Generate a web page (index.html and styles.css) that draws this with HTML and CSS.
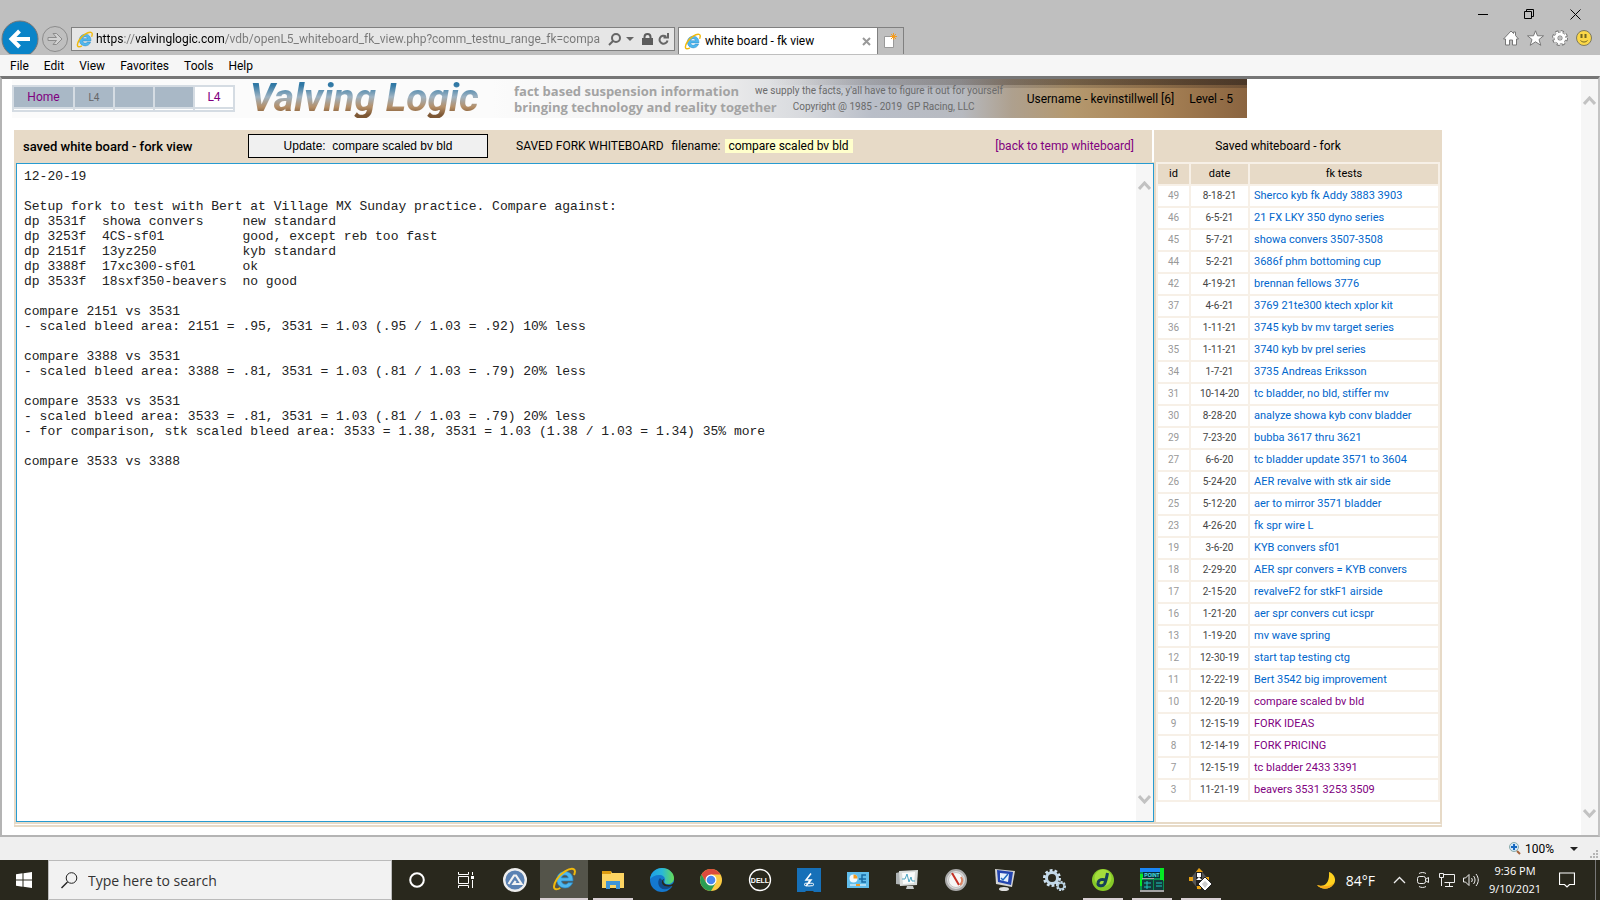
FILE: index.html
```html
<!DOCTYPE html>
<html lang="en">
<head>
  <meta charset="utf-8">
  <title>white board - fk view</title>
  <link rel="stylesheet" href="styles.css">
</head>
<body>
  <!-- shared icon -->
  <svg class="defs" aria-hidden="true">
    <defs>
      <symbol id="ie" viewBox="0 0 24 24">
        <path d="M21 14H9.500c.3 2 1.700 3.200 3.600 3.200 1.300 0 2.300-.5 2.900-1.500h4.600c-1.100 3.200-4 5.300-7.600 5.300-4.900 0-8.200-3.500-8.200-8.200C4.800 7.900 8.300 4.500 13 4.500c5 0 8.300 3.700 8 9.500zM9.600 10.800h6.600c-.3-1.700-1.500-2.700-3.300-2.700-1.700 0-2.900 1-3.300 2.700z" fill="#4fb7ee" stroke="#2284c4" stroke-width=".7"/>
        <path d="M22 8c1.400-3.200 1.300-5.500-.8-6C17 1 9 6 5 12 1.500 17.500 1 22 4 22.300c1.300.1 2.700-.4 4.300-1.300" fill="none" stroke="#f0b90c" stroke-width="2"/>
      </symbol>
    </defs>
  </svg>

  <header class="titlebar">
    <div class="window-buttons">
      <button aria-label="Minimize"><svg width="11" height="11"><path d="M0 5.500h10" stroke="#000"/></svg></button>
      <button aria-label="Restore"><svg width="11" height="11" fill="none" stroke="#000"><path d="M.5 2.500h7v7h-7zM2.500 2.500v-2h7v7h-2"/></svg></button>
      <button aria-label="Close"><svg width="11" height="11"><path d="M.5.5l10 10M10.500.5l-10 10" stroke="#000"/></svg></button>
    </div>
    <div class="toolbar">
      <button class="back" aria-label="Back"><svg width="38" height="34" viewBox="0 0 38 34"><circle cx="19" cy="19" r="18" fill="#0a84c8" stroke="#777"/><path d="M29 19H11M18.500 11L10.500 19l8 8" fill="none" stroke="#fff" stroke-width="4"/></svg></button>
      <button class="forward" aria-label="Forward"><svg width="26" height="26" viewBox="0 0 26 26" fill="none" stroke="#8c8c8c"><circle cx="13" cy="13" r="12.500"/><path d="M6 11.500h8.500l-3.500-4h3.500l5.500 5.500-5.500 5.500h-3.500l3.500-4H6z" fill="#d2d2d2"/></svg></button>
      <div class="address">
        <svg width="17" height="17"><use href="#ie"/></svg>
        <input type="text" aria-label="Address" value="https://valvinglogic.com/vdb/openL5_whiteboard_fk_view.php?comm_testnu_range_fk=compa">
        <button aria-label="Search"><svg width="13" height="13" fill="none" stroke="#666" stroke-width="2"><circle cx="8" cy="5" r="4"/><path d="M5 8L1 12"/></svg></button>
        <button class="drop" aria-label="Show address list"><svg width="8" height="4"><path d="M0 0h8L4 4z" fill="#666"/></svg></button>
        <button aria-label="Security report"><svg width="11" height="13"><path d="M2.500 6V4a3 3 0 0 1 6 0v2" fill="none" stroke="#5c5c5c" stroke-width="2"/><path d="M0 5h11v7H0z" fill="#5c5c5c"/></svg></button>
        <button aria-label="Refresh"><svg width="11" height="12" fill="none" stroke="#666" stroke-width="2"><path d="M9.500 7.500A4 4 0 1 1 8 3.500M10 0v4.500H5.500"/></svg></button>
      </div>
      <div class="tab">
        <svg width="17" height="17"><use href="#ie"/></svg>
        <span>white board - fk view</span>
        <button aria-label="Close tab"><svg width="9" height="9"><path d="M1 1l7 7M8 1L1 8" stroke="#999" stroke-width="2"/></svg></button>
      </div>
      <button class="new-tab" aria-label="New tab"><svg width="15" height="16"><path d="M1.500 3.500h9v11h-9z" fill="#fff" stroke="#999"/><path d="M10.500 0v7M7 3.500h7M8 1l5 5M13 1L8 6" stroke="#f49b1c" stroke-width="1"/></svg></button>
      <div class="tools">
        <button aria-label="Home"><svg width="16" height="16"><path d="M8 1l2.500 2.500V2h2v3.500L15.500 9h-2v6H9.500v-5h-3v5H2.500V9H.5z" fill="#fff" stroke="#777"/></svg></button>
        <button aria-label="Favorites"><svg width="17" height="16"><path d="M8.500.8l2 5h6l-4.500 3.700 1.800 5.800-5.300-3.500-5.300 3.500L5 9.500.5 5.800h6z" fill="#fff" stroke="#777"/></svg></button>
        <button aria-label="Settings"><svg width="16" height="16" viewBox="0 0 16 16"><circle cx="8" cy="8" r="6" fill="none" stroke="#777" stroke-width="4" stroke-dasharray="2.700 2"/><circle cx="8" cy="8" r="4" fill="none" stroke="#777" stroke-width="4"/><circle cx="8" cy="8" r="6" fill="none" stroke="#fff" stroke-width="2" stroke-dasharray="2 2.700"/><circle cx="8" cy="8" r="4" fill="none" stroke="#fff" stroke-width="3"/></svg></button>
        <button aria-label="Send a smile"><svg width="16" height="16"><circle cx="8" cy="8" r="7.500" fill="#fbd748" stroke="#7d7a60"/><path d="M5.500 4v4M9.500 4v4" stroke="#6f6420" stroke-width="2"/><path d="M4.500 10.500c2 2 5 2 7 0" fill="none" stroke="#6f6420"/></svg></button>
      </div>
    </div>
  </header>

  <nav class="menubar">
    <button>File</button>
    <button>Edit</button>
    <button>View</button>
    <button>Favorites</button>
    <button>Tools</button>
    <button>Help</button>
  </nav>

  <div class="viewport">
    <main class="page">
      <div class="banner">
        <nav class="levels">
          <a class="home" href="#">Home</a>
          <a class="small" href="#">L4</a>
          <span></span>
          <span></span>
          <a class="current" href="#">L4</a>
        </nav>
        <h1>Valving Logic</h1>
        <div class="slogans">
          <p><b>fact based suspension information</b> <i>we supply the facts, y'all have to figure it out for yourself</i></p>
          <p><b>bringing technology and reality together</b> <i>Copyright @ 1985 - 2019&nbsp; GP Racing, LLC</i></p>
        </div>
        <div class="user"><span>Username - kevinstillwell [6]</span><span>Level - 5</span></div>
      </div>

      <div class="board">
        <section class="editor">
          <form class="editor-head">
            <h2>saved white board - fork view</h2>
            <button type="button" class="update">Update:&nbsp; compare scaled bv bld</button>
            <span class="kind">SAVED FORK WHITEBOARD</span>
            <span>filename:</span>
            <mark>compare scaled bv bld</mark>
            <a href="#">[back to temp whiteboard]</a>
          </form>
          <div class="notes">
            <textarea aria-label="Whiteboard notes" spellcheck="false">12-20-19

Setup fork to test with Bert at Village MX Sunday practice. Compare against:
dp 3531f  showa convers     new standard
dp 3253f  4CS-sf01          good, except reb too fast
dp 2151f  13yz250           kyb standard
dp 3388f  17xc300-sf01      ok
dp 3533f  18sxf350-beavers  no good

compare 2151 vs 3531
- scaled bleed area: 2151 = .95, 3531 = 1.03 (.95 / 1.03 = .92) 10% less

compare 3388 vs 3531
- scaled bleed area: 3388 = .81, 3531 = 1.03 (.81 / 1.03 = .79) 20% less

compare 3533 vs 3531
- scaled bleed area: 3533 = .81, 3531 = 1.03 (.81 / 1.03 = .79) 20% less
- for comparison, stk scaled bleed area: 3533 = 1.38, 3531 = 1.03 (1.38 / 1.03 = 1.34) 35% more

compare 3533 vs 3388</textarea>
            <div class="scrollbar">
              <svg width="13" height="9"><path d="M1 8l5.500-6L12 8" fill="none" stroke="#c2c2c2" stroke-width="3"/></svg>
              <svg width="13" height="9"><path d="M1 1l5.500 6L12 1" fill="none" stroke="#c2c2c2" stroke-width="3"/></svg>
            </div>
          </div>
        </section>

        <section class="saved">
          <h2>Saved whiteboard - fork</h2>
          <table>
            <thead>
              <tr><th>id</th><th>date</th><th>fk tests</th></tr>
            </thead>
            <tbody>
              <tr><td>49</td><td>8-18-21</td><td><a href="#">Sherco kyb fk Addy 3883 3903</a></td></tr>
              <tr><td>46</td><td>6-5-21</td><td><a href="#">21 FX LKY 350 dyno series</a></td></tr>
              <tr><td>45</td><td>5-7-21</td><td><a href="#">showa convers 3507-3508</a></td></tr>
              <tr><td>44</td><td>5-2-21</td><td><a href="#">3686f phm bottoming cup</a></td></tr>
              <tr><td>42</td><td>4-19-21</td><td><a href="#">brennan fellows 3776</a></td></tr>
              <tr><td>37</td><td>4-6-21</td><td><a href="#">3769 21te300 ktech xplor kit</a></td></tr>
              <tr><td>36</td><td>1-11-21</td><td><a href="#">3745 kyb bv mv target series</a></td></tr>
              <tr><td>35</td><td>1-11-21</td><td><a href="#">3740 kyb bv prel series</a></td></tr>
              <tr><td>34</td><td>1-7-21</td><td><a href="#">3735 Andreas Eriksson</a></td></tr>
              <tr><td>31</td><td>10-14-20</td><td><a href="#">tc bladder, no bld, stiffer mv</a></td></tr>
              <tr><td>30</td><td>8-28-20</td><td><a href="#">analyze showa kyb conv bladder</a></td></tr>
              <tr><td>29</td><td>7-23-20</td><td><a href="#">bubba 3617 thru 3621</a></td></tr>
              <tr><td>27</td><td>6-6-20</td><td><a href="#">tc bladder update 3571 to 3604</a></td></tr>
              <tr><td>26</td><td>5-24-20</td><td><a href="#">AER revalve with stk air side</a></td></tr>
              <tr><td>25</td><td>5-12-20</td><td><a href="#">aer to mirror 3571 bladder</a></td></tr>
              <tr><td>23</td><td>4-26-20</td><td><a href="#">fk spr wire L</a></td></tr>
              <tr><td>19</td><td>3-6-20</td><td><a href="#">KYB convers sf01</a></td></tr>
              <tr><td>18</td><td>2-29-20</td><td><a href="#">AER spr convers = KYB convers</a></td></tr>
              <tr><td>17</td><td>2-15-20</td><td><a href="#">revalveF2 for stkF1 airside</a></td></tr>
              <tr><td>16</td><td>1-21-20</td><td><a href="#">aer spr convers cut icspr</a></td></tr>
              <tr><td>13</td><td>1-19-20</td><td><a href="#">mv wave spring</a></td></tr>
              <tr><td>12</td><td>12-30-19</td><td><a href="#">start tap testing ctg</a></td></tr>
              <tr><td>11</td><td>12-22-19</td><td><a href="#">Bert 3542 big improvement</a></td></tr>
              <tr><td>10</td><td>12-20-19</td><td><a class="seen" href="#">compare scaled bv bld</a></td></tr>
              <tr><td>9</td><td>12-15-19</td><td><a class="seen" href="#">FORK IDEAS</a></td></tr>
              <tr><td>8</td><td>12-14-19</td><td><a class="seen" href="#">FORK PRICING</a></td></tr>
              <tr><td>7</td><td>12-15-19</td><td><a class="seen" href="#">tc bladder 2433 3391</a></td></tr>
              <tr><td>3</td><td>11-21-19</td><td><a class="seen" href="#">beavers 3531 3253 3509</a></td></tr>
            </tbody>
          </table>
        </section>
      </div>
      <div class="board-foot"></div>
    </main>
    <div class="scrollbar">
      <svg width="13" height="9"><path d="M1 8l5.500-6L12 8" fill="none" stroke="#c2c2c2" stroke-width="3"/></svg>
      <svg width="13" height="9"><path d="M1 1l5.500 6L12 1" fill="none" stroke="#c2c2c2" stroke-width="3"/></svg>
    </div>
  </div>

  <div class="statusbar">
    <button class="zoom"><svg width="12" height="13"><path d="M8 9l3 3" stroke="#a5643c" stroke-width="2"/><circle cx="5" cy="5" r="4.500" fill="#cfe6f8" stroke="#8aa"/><path d="M5 2v6M2 5h6" stroke="#1468c0" stroke-width="2"/></svg>100%</button>
    <button class="zoom-drop" aria-label="Change zoom level"><svg width="8" height="4"><path d="M0 0h8L4 4z" fill="#222"/></svg></button>
    <svg class="grip" width="8" height="8" fill="#b5b5b5"><path d="M6 0h2v2H6zM3 3h2v2H3zM6 3h2v2H6zM0 6h2v2H0zM3 6h2v2H3zM6 6h2v2H6z"/></svg>
  </div>

  <footer class="taskbar">
    <button class="start" aria-label="Start"><svg width="16" height="16" fill="#fff"><path d="M0 2.300l6.500-1v6.200H0zM7.500 1.200L16 0v7.500H7.500zM0 8.500h6.500v6.200l-6.500-1zM7.500 8.500H16V16l-8.500-1.200z"/></svg></button>
    <label class="search">
      <svg width="17" height="17" fill="none" stroke="#222" stroke-width="1"><circle cx="10.500" cy="6" r="5.300"/><path d="M6.500 10L.5 16" stroke-width="1.500"/></svg>
      <input type="text" aria-label="Search" placeholder="Type here to search">
    </label>
    <div class="apps">
      <button aria-label="Cortana"><svg width="16" height="16"><circle cx="8" cy="8" r="6.800" fill="none" stroke="#fff" stroke-width="2"/></svg></button>
      <button aria-label="Task View"><svg width="16" height="16" fill="none" stroke="#fff"><path d="M.5 0v2.500h10V0M.5 16v-2.500h10V16M.5 4.500h10v7H.5zM14.500 0v3M14.500 8v8"/><path d="M13 4h3v3h-3z" fill="#fff" stroke="none"/></svg></button>
      <button aria-label="Assistant"><svg width="24" height="24"><circle cx="12" cy="12" r="10.800" fill="#5b82b3" stroke="#eee" stroke-width="2.400"/><path d="M5.500 16L11 7.500h2l5.500 8.500h-8l2.200-3" fill="none" stroke="#f3f3f3" stroke-width="2.200"/></svg></button>
      <button class="open active" aria-label="Internet Explorer"><svg width="24" height="24"><use href="#ie"/></svg></button>
      <button class="open" aria-label="File Explorer"><svg width="22" height="20"><path d="M0 1h9l1 2h12v15H0z" fill="#fcd462"/><path d="M0 1h9v3H0z" fill="#dd9c12"/><path d="M4 19v-8h14v8h-4v-4H8v4z" fill="#3f95d8"/></svg></button>
      <button aria-label="Edge"><svg width="24" height="24"><defs><linearGradient id="edge"><stop offset="0" stop-color="#1d9fe8"/><stop offset=".5" stop-color="#29b8d8"/><stop offset="1" stop-color="#66dc54"/></linearGradient></defs><circle cx="12" cy="12" r="12" fill="#1478cf"/><path d="M0 11C1 4 6 0 12 0c7 0 12 5 12 10 0 4-3 6-6 6-4 0-4-2-3-4 0-3-2-5-6-5-4 0-7 2-9 4z" fill="url(#edge)"/><path d="M10 10c-4 4-1 13 7 11 2-.4 4-1.500 5-3-6 2-11-1-10-6z" fill="#114a8b"/><path d="M14 11c-2 3 1 6 5 6 2 0 4-1 5-3v5l-2-1c-6 2-11-1-10-5 .3-1 1-2 2-2z" fill="#28281e"/></svg></button>
      <button aria-label="Chrome"><svg width="22" height="22"><circle cx="11" cy="11" r="11" fill="#fbcb43"/><path d="M1.500 5.500A11 11 0 0 1 20.500 5.500H11L6.200 13.700z" fill="#dc4a3c"/><path d="M1.500 5.500A11 11 0 0 0 11 22l4.800-8.200H6.200z" fill="#2a9d54"/><circle cx="11" cy="11" r="5.500" fill="#fff"/><circle cx="11" cy="11" r="4.300" fill="#4886ef"/></svg></button>
      <button aria-label="Dell"><svg width="24" height="24"><circle cx="12" cy="12" r="10.500" fill="none" stroke="#fff" stroke-width="1.300"/><text class="dell" x="12" y="15" text-anchor="middle">DELL</text></svg></button>
      <button aria-label="Power tool"><svg width="24" height="24"><path d="M0 0h24v24h-7l-1-1H9l-1 1H0z" fill="#1670b8"/><path d="M14 5.500L9 12h5l-5 6M12 13v3" fill="none" stroke="#fff" stroke-width="1.500"/><ellipse cx="12" cy="16.500" rx="5" ry="1.500" fill="none" stroke="#fff"/></svg></button>
      <button aria-label="Control Panel"><svg width="22" height="17"><path d="M0 0h22v16H0z" fill="#60bdec"/><circle cx="6.500" cy="6.500" r="4" fill="#f4f9fc"/><path d="M6.500 6.500v-4a4 4 0 0 1 4 4z" fill="#f19a22"/><path d="M12 7h3V3h4M15 7h4M15 7v3h4" fill="none" stroke="#176ba5" stroke-width="1.500"/><path d="M3 13h16" stroke="#fff"/><path d="M9 13h4" stroke="#f19a22" stroke-width="2"/></svg></button>
      <button aria-label="Performance Monitor"><svg width="24" height="22"><path d="M1 4l8-2v14l-8-1z" fill="#aeb3b4"/><path d="M4 2l19-1-1 15-17 1z" fill="#d9dddc"/><path d="M7 4l13-1-1 11-11 1z" fill="#fafcfc"/><path d="M7 10h3l2-5 2 8 2-5 1 4h3" fill="none" stroke="#4ca5c2"/><path d="M12 17h6l1 3h-8z" fill="#c8cccc"/></svg></button>
      <button aria-label="Gauge"><svg width="24" height="24"><circle cx="12" cy="12" r="10" fill="#dedede" stroke="#aaa" stroke-width="2"/><circle cx="12" cy="12" r="7.500" fill="#f6f6f6" stroke="#c4c4c4"/><path d="M8 5l7 12" stroke="#c53025" stroke-width="2"/><path d="M17 9c2 3 1 6-1 8" fill="none" stroke="#dd8462" stroke-width="2"/></svg></button>
      <button aria-label="System"><svg width="22" height="24"><path d="M1 1l20 2-3 16L2 16z" fill="#d5d5d5"/><path d="M3 2l16 2-2 13L4 14z" fill="#2445b0"/><path d="M6 5l9 1-1 8-8-2z" fill="#e8f2fc"/><path d="M7 10l2 2 5-6" fill="none" stroke="#226bc0" stroke-width="1.500"/><ellipse cx="10" cy="21" rx="5" ry="2" fill="#ddd"/></svg></button>
      <button aria-label="Services"><svg width="24" height="24" fill="none"><circle cx="10" cy="10" r="7.500" stroke="#cfe2f0" stroke-width="3" stroke-dasharray="2.700 2"/><circle cx="10" cy="10" r="5.500" stroke="#c2d8e8" stroke-width="3"/><circle cx="19" cy="18" r="4" stroke="#cfe2f0" stroke-width="2" stroke-dasharray="2 1"/><circle cx="19" cy="18" r="3" stroke="#b5cfdf" stroke-width="1.500"/></svg></button>
      <button class="open" aria-label="Dreamweaver"><svg width="22" height="22"><circle cx="11" cy="11" r="11" fill="#86c928"/><circle cx="11" cy="9" r="8.500" fill="#a4dd3c"/><path d="M15.500 4c-1 5-1.500 8-3 11-2 3-7 2-6.500-1 .5-4 5-4 7-3" fill="none" stroke="#174058" stroke-width="3"/></svg></button>
      <button class="open" aria-label="Point"><svg width="24" height="24"><path d="M0 0h24v24H0z" fill="#0b8e4e"/><path d="M0 0h20v4H0z" fill="#1a86f5"/><path d="M20 0h4v13h-4zM0 6h3v12H0z" fill="#04e924"/><path d="M3 4h17v6H3z" fill="#062c38"/><path d="M2 12h11v10H2zM14 12h9v10h-9z" fill="#12393a"/><path d="M4 15h7M4 19h7M16 15h6M16 18h6M7 13v8" stroke="#1fc7c0"/><path d="M0 22h24v2H0zM2 10h12v1H2z" fill="#a3a3a3"/><text class="point" x="12" y="9" text-anchor="middle">POINT</text></svg></button>
      <button class="open" aria-label="Diamond"><svg width="24" height="24"><path d="M10 0l9 11-9 11L1 11z" fill="#565656"/><path d="M10 0l4 4H7zM0 9h4v4H0zM15 9h5v4h-5zM8 17h4v4H8z" fill="#e7a012"/><path d="M7 4h6v14H7z" fill="#222"/><path d="M8 5h4v4H8zM7 12l3-3 3 3z" fill="#fff"/><path d="M16 9l7 7-7 7-7-7z" fill="#fff" stroke="#222"/><path d="M16 13l3 3-3 4-3-4z" fill="#ccc"/></svg></button>
    </div>
    <div class="tray">
      <button class="weather"><svg width="19" height="19"><path d="M12 1c6 2 8 9 4 13-4 5-12 5-16 0 5 2 13 1 12-13z" fill="#ffd21f"/><path d="M17 12c-4 7-12 7-17 2 5 2 13 2 17-2z" fill="#f9a81c"/></svg>84°F</button>
      <button aria-label="Show hidden icons"><svg width="13" height="8"><path d="M1 7l5.500-5.500L12 7" fill="none" stroke="#eee" stroke-width="1.300"/></svg></button>
      <button aria-label="Meet Now"><svg width="12" height="16" fill="none" stroke="#eee"><rect x=".5" y="4.500" width="8" height="7" rx="2"/><path d="M9 7l2.500-1.500v5L9 9M2 1.500c2-1.300 5-1.300 7 0M2 14.500c2 1.300 5 1.300 7 0"/></svg></button>
      <button aria-label="Network"><svg width="17" height="14" fill="none" stroke="#eee"><path d="M4.500 1.500h11v8h-10M10.500 10v3M6 13.500h8M.5.5h4v4h-4zM2.500 5v8"/></svg></button>
      <button aria-label="Volume"><svg width="17" height="14" fill="none" stroke="#eee"><path d="M.5 5v4h2l3.500 3.500v-11L2.500 5zM8.500 5c1 1.300 1 2.700 0 4M10.500 3c2 2.500 2 5.500 0 8M13 1c3 4 3 8 0 12"/></svg></button>
      <time class="clock"><span>9:36 PM</span><span>9/10/2021</span></time>
      <button class="notices" aria-label="Notifications"><svg width="16" height="16"><path d="M.5 1h15v11.500h-5L8 15l-2.500-2.500h-5z" fill="none" stroke="#fff" stroke-width="1.200"/></svg></button>
    </div>
  </footer>
</body>
</html>
```

FILE: styles.css
```css
* {
  box-sizing: border-box;
}
body {
  margin: 0;
  min-height: 100vh;
  display: flex;
  flex-direction: column;
  background: #efefef;
  font-family: Roboto, sans-serif;
  font-size: 12px;
  color: #000;
}
button {
  display: flex;
  align-items: center;
  justify-content: center;
  padding: 0;
  border: 0;
  background: none;
  font: inherit;
  color: inherit;
}
svg {
  display: block;
  flex: none;
}
a {
  color: #800080;
  text-decoration: none;
}
h1, h2, p {
  margin: 0;
  font-weight: normal;
}
.defs {
  position: absolute;
  width: 0;
  height: 0;
}

/* browser window */
.titlebar {
  background: #bfbfbf;
  height: 55px;
  display: flex;
  flex-direction: column;
  justify-content: space-between;
}
.window-buttons {
  display: flex;
  justify-content: flex-end;
  height: 20px;
  padding-top: 8px;
}
.window-buttons button {
  width: 46px;
}
.window-buttons button:last-child {
  margin-right: 2px;
}
.toolbar {
  display: flex;
  align-items: flex-end;
  height: 35px;
  padding-left: 1px;
}
.back {
  margin-bottom: 1px;
}
.forward {
  margin: 0 3px 3px 3px;
}
.address {
  display: flex;
  align-items: center;
  flex: 0 1 604px;
  height: 24px;
  margin-bottom: 4px;
  padding-left: 4px;
  border: 1px solid #808080;
  background: #e6e6e6;
}
.address input {
  flex: 1;
  min-width: 0;
  padding: 0;
  margin: 0 2px 0 3px;
  border: 0;
  font: 12px Roboto, sans-serif;
  color: transparent;
  background: linear-gradient(to right, #000 28px, #777 28px, #777 40px, #000 40px, #000 129px, #777 129px);
  -webkit-background-clip: text;
  background-clip: text;
}
.address button {
  margin-right: 5px;
}
.address .drop {
  margin-right: 8px;
}
.tab {
  display: flex;
  align-items: center;
  flex: 0 1 200px;
  height: 27px;
  margin: 0 0 1px 3px;
  padding: 0 6px 0 5px;
  border: 1px solid #808080;
  border-bottom: 0;
  background: #fff;
}
.tab span {
  flex: 1;
  padding-left: 4px;
}
.new-tab {
  width: 26px;
  height: 27px;
  margin-bottom: 1px;
  border: 1px solid #808080;
  border-width: 1px 1px 0 0;
}
.tools {
  display: flex;
  gap: 8px;
  margin-left: auto;
  padding: 0 8px 9px 0;
}
.menubar {
  display: flex;
  gap: 15px;
  height: 21px;
  padding-left: 10px;
  background: #f6f6f6;
}
.viewport {
  flex: 1;
  display: flex;
  border: 2px solid #b4b4b4;
  border-top: 3px solid #767676;
  border-right-color: #c4c4c4;
  background: #fff;
}
.scrollbar {
  display: flex;
  flex: none;
  flex-direction: column;
  justify-content: space-between;
  align-items: center;
  width: 17px;
  padding: 17px 0;
  background: #f6f6f6;
}
.statusbar {
  display: flex;
  align-items: center;
  justify-content: flex-end;
  height: 23px;
  padding-right: 2px;
}
.zoom {
  gap: 4px;
}
.zoom-drop {
  margin: 0 12px 0 16px;
}
.grip {
  align-self: flex-end;
  margin-bottom: 2px;
}

/* page */
.page {
  flex: 1;
  min-width: 0;
  display: flex;
  flex-direction: column;
  padding: 0 139px 8px 12px;
}
.banner {
  display: flex;
  align-items: center;
  height: 39px;
  margin: 0 195px 12px -2px;
  background:
    linear-gradient(to right, transparent, rgba(50, 38, 30, 0.6)) right top / 480px 6px no-repeat,
    linear-gradient(to right, transparent, rgba(50, 38, 30, 0.3)) right top / 480px 9px no-repeat,
    linear-gradient(to right, #fbfbfb 480px, #eee 700px, #d8dade 790px, #b9bec8 860px, #b7bac0 950px, #aea08e 1000px, #b4986e 1060px, #a98457 1140px, #8a6440 1235px);
}
.levels {
  display: flex;
  gap: 2px;
  height: 27px;
  padding: 2px 2px 5px 2px;
  background: #d5dce3;
}
.levels > * {
  display: flex;
  align-items: center;
  justify-content: center;
  width: 38px;
  background: #a9b8c6;
  box-shadow: 0 2px #d5dce3, 0 3px #fff;
}
.levels .home {
  width: 59px;
}
.levels .small {
  font-size: 10px;
  color: #666;
}
.levels .current {
  background: #fff;
}
h1 {
  flex: none;
  width: 254px;
  height: 39px;
  margin-left: 15px;
  font: italic bold 39px/38px Roboto, sans-serif;
  color: transparent;
  background: linear-gradient(to bottom, #2f78a5 6px, #9fb3c2 18px, #b58f68 28px, #7d5734 36px);
  -webkit-background-clip: text;
  background-clip: text;
}
.slogans {
  flex: 1;
  padding-left: 10px;
  white-space: nowrap;
}
.slogans p {
  display: flex;
  align-items: center;
  gap: 16px;
  height: 16px;
}
.slogans b {
  font: bold 13px 'Open Sans', sans-serif;
  color: #a3a3a3;
}
.slogans i {
  font-style: normal;
  font-size: 10px;
  color: #6a6a6a;
}
.user {
  display: flex;
  gap: 15px;
  padding-right: 14px;
  white-space: nowrap;
}
.board {
  flex: 1;
  display: flex;
  border: 2px solid #e7dac7;
  border-top: 0;
  background: #e7dac7;
}
.editor {
  flex: 1;
  display: flex;
  flex-direction: column;
}
.editor-head {
  display: flex;
  align-items: center;
  height: 32px;
  padding: 0 18px 0 7px;
  border-right: 2px solid #fff;
  white-space: nowrap;
}
.editor-head h2 {
  flex: 0 0 225px;
  font-size: 13px;
  font-weight: 500;
}
.update {
  width: 240px;
  height: 24px;
  border: 1px solid #000;
  background: #f0f0f0;
  font: 12px 'Liberation Sans', sans-serif;
}
.kind {
  margin: 0 8px 0 28px;
}
.editor-head mark {
  margin-left: 5px;
  padding: 0 4px 0 3px;
  background: #ffc;
  line-height: 14px;
}
.editor-head a {
  margin-left: auto;
}
.notes {
  flex: 1;
  display: flex;
  margin-top: 1px;
  border: 1px solid #279bd1;
  background: #fff;
}
.notes textarea {
  flex: 1;
  padding: 5px 7px;
  border: 0;
  outline: 0;
  resize: none;
  overflow: hidden;
  background: none;
  font: 13px/15px 'Liberation Mono', monospace;
  color: #222;
}
.saved {
  flex: 0 0 286px;
  display: flex;
  flex-direction: column;
  padding-left: 2px;
  background: linear-gradient(to right, #e7dac7 2px, #fff 2px);
}
.saved h2 {
  height: 32px;
  padding-right: 40px;
  background: #e7dac7;
  font-size: 12px;
  line-height: 32px;
  text-align: center;
}
table {
  width: 100%;
  border-spacing: 2px;
  table-layout: fixed;
  background: #f7f0e7;
}
th, td {
  height: 20px;
  padding: 0;
  background: #fff;
  font-size: 10px;
  font-weight: normal;
  line-height: 20px;
  text-align: center;
  color: #444;
  white-space: nowrap;
}
th {
  background: #e7dac7;
  font-size: 11px;
  color: #000;
}
th:nth-child(1) {
  width: 31px;
}
th:nth-child(2) {
  width: 57px;
}
td:nth-child(1) {
  color: #999;
}
td:nth-child(3) {
  padding-left: 4px;
  font-size: 11px;
  text-align: left;
}
td a {
  color: #06c;
}
td a.seen {
  color: #800080;
}
.board-foot {
  height: 3px;
  border: 2px solid #e7dac7;
  border-top: 1px solid #fff;
}

/* windows taskbar */
.taskbar {
  display: flex;
  height: 40px;
  background: #29281d;
  color: #fff;
  font-family: 'Open Sans', sans-serif;
}
.start {
  width: 48px;
}
.search {
  display: flex;
  align-items: center;
  flex: 0 1 344px;
  padding-left: 12px;
  border: 1px solid #bbb;
  background: #f2f2f2;
}
.search input {
  flex: 1;
  min-width: 0;
  margin-left: 10px;
  padding: 0;
  border: 0;
  background: none;
  font: 14px 'Open Sans', sans-serif;
}
.search input::placeholder {
  color: #333;
}
.apps {
  display: flex;
  gap: 1px;
  padding-left: 1px;
}
.apps button {
  width: 48px;
  height: 40px;
}
.apps .open {
  background: linear-gradient(#d8d0d4, #d8d0d4) center bottom / 40px 2px no-repeat;
}
.apps .active {
  border-bottom: 2px solid #d8d0d4;
  background: #54544a;
}
.dell {
  font: bold 7px 'Liberation Sans', sans-serif;
  fill: #fff;
}
.point {
  font: bold 5px 'Liberation Sans', sans-serif;
  fill: #4de5e5;
}
.tray {
  display: flex;
  align-items: center;
  margin-left: auto;
}
.tray button {
  width: 24px;
  height: 40px;
}
.tray .weather {
  width: auto;
  gap: 10px;
  margin-right: 12px;
  font-size: 14px;
}
.clock {
  display: flex;
  flex-direction: column;
  width: 64px;
  font-size: 11px;
  line-height: 18px;
  text-align: center;
}
.tray .notices {
  width: 49px;
  padding-right: 8px;
  border-right: 1px solid #777;
  margin-right: 4px;
}
```
